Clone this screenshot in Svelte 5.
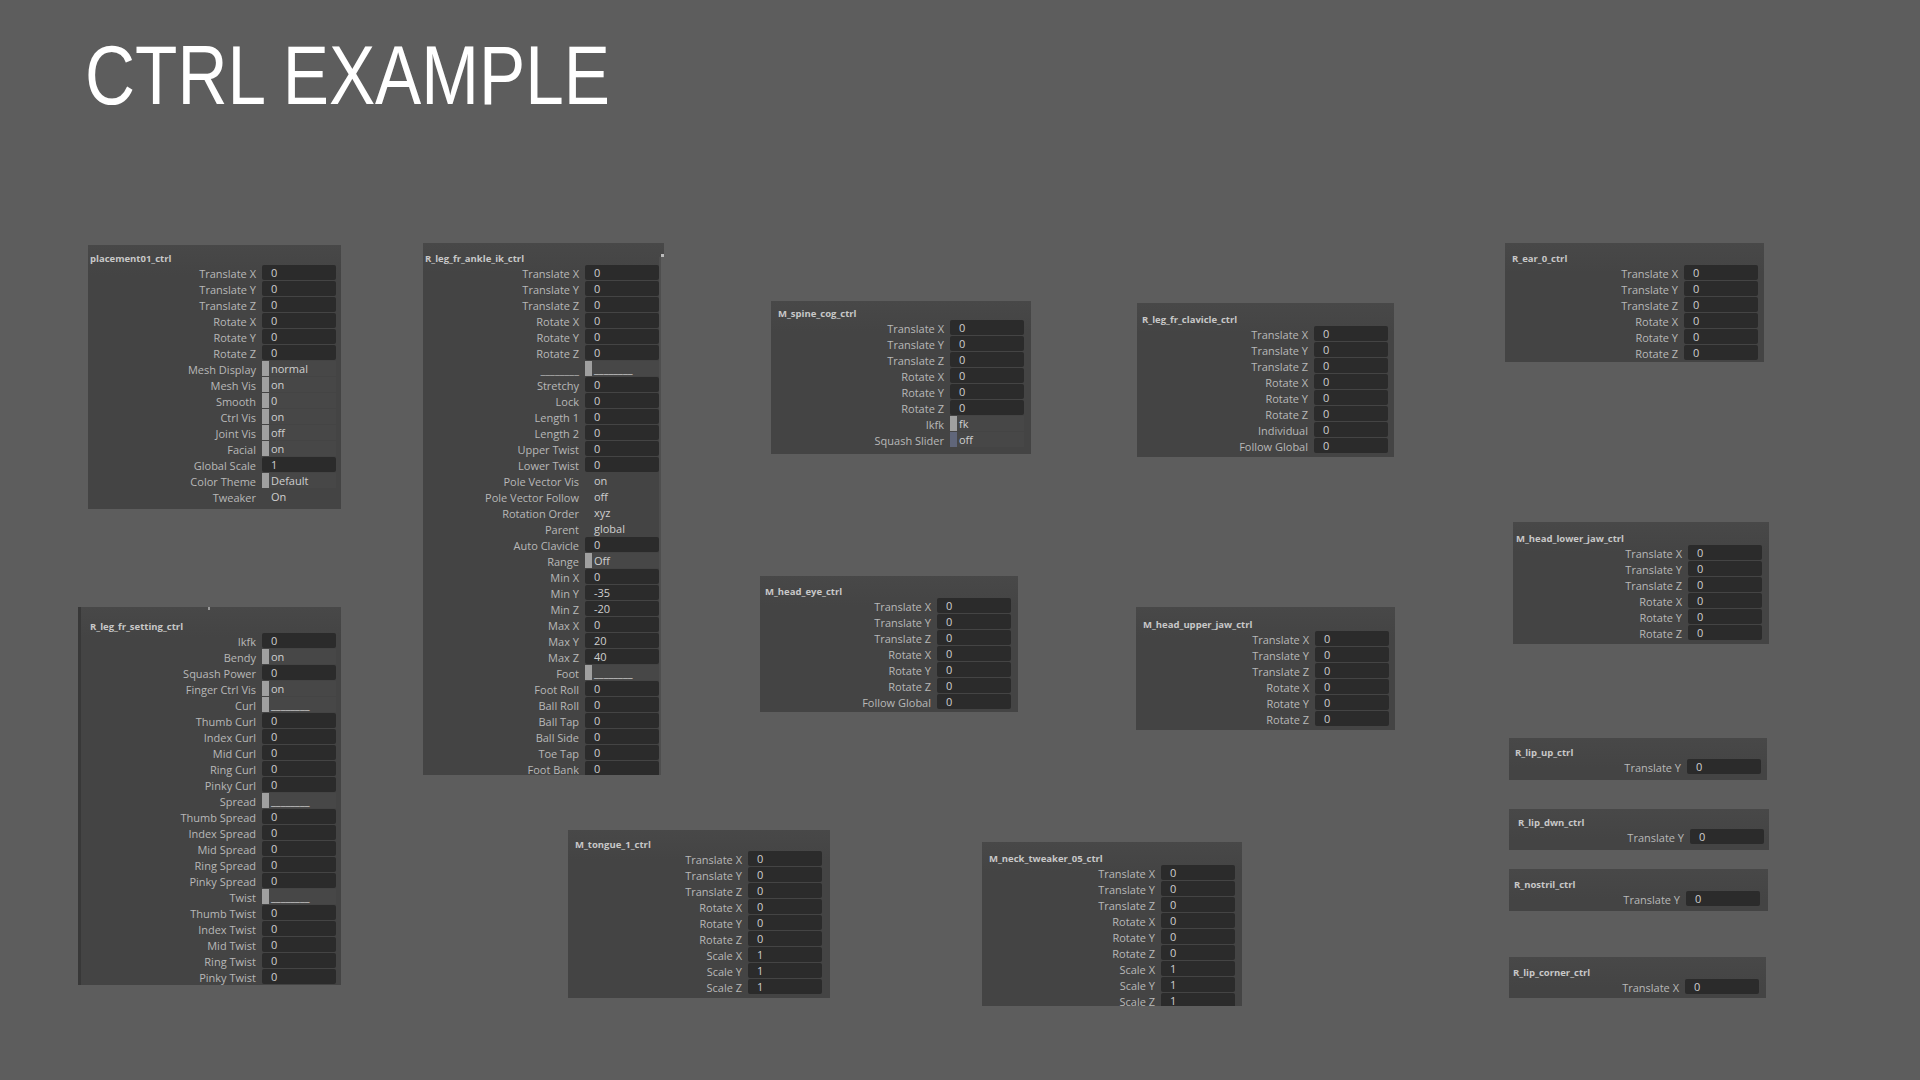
<script>
  const xf = ['Translate X', 'Translate Y', 'Translate Z', 'Rotate X', 'Rotate Y', 'Rotate Z']
    .map(t => ({ l: t, v: '0' }))
  const f = (l, v = '0') => ({ l, v })
  const h = (l, v) => ({ l, v, kind: 'handle' })
  const p = (l, v) => ({ l, v, kind: 'plain' })
  const line = '________'

  const panels = [
    { name: 'placement01_ctrl', x: 88, y: 245, w: 253, h: 264, tx: 2, head: 20, fx: 174, rows: [
      ...xf, h('Mesh Display', 'normal'), h('Mesh Vis', 'on'), h('Smooth', '0'), h('Ctrl Vis', 'on'),
      h('Joint Vis', 'off'), h('Facial', 'on'), f('Global Scale', '1'), h('Color Theme', 'Default'), p('Tweaker', 'On') ] },
    { name: 'R_leg_fr_setting_ctrl', x: 78, y: 607, w: 263, h: 378, tx: 12, head: 26, fx: 184, strip: true, rows: [
      f('Ikfk'), h('Bendy', 'on'), f('Squash Power'), h('Finger Ctrl Vis', 'on'), h('Curl', line),
      f('Thumb Curl'), f('Index Curl'), f('Mid Curl'), f('Ring Curl'), f('Pinky Curl'), h('Spread', line),
      f('Thumb Spread'), f('Index Spread'), f('Mid Spread'), f('Ring Spread'), f('Pinky Spread'), h('Twist', line),
      f('Thumb Twist'), f('Index Twist'), f('Mid Twist'), f('Ring Twist'), f('Pinky Twist') ] },
    { name: 'R_leg_fr_ankle_ik_ctrl', x: 423, y: 243, w: 241, h: 532, tx: 2, head: 22, fx: 162, side: true, rows: [
      ...xf, h(line, line), f('Stretchy'), f('Lock'), f('Length 1'), f('Length 2'), f('Upper Twist'), f('Lower Twist'),
      p('Pole Vector Vis', 'on'), p('Pole Vector Follow', 'off'), p('Rotation Order', 'xyz'), p('Parent', 'global'),
      f('Auto Clavicle'), h('Range', 'Off'), f('Min X'), f('Min Y', '-35'), f('Min Z', '-20'), f('Max X'), f('Max Y', '20'), f('Max Z', '40'),
      h('Foot', line), f('Foot Roll'), f('Ball Roll'), f('Ball Tap'), f('Ball Side'), f('Toe Tap'), f('Foot Bank') ] },
    { name: 'M_spine_cog_ctrl', x: 771, y: 301, w: 260, h: 153, tx: 7, head: 19, fx: 179, rows: [
      ...xf, h('Ikfk', 'fk'), { l: 'Squash Slider', v: 'off', kind: 'handle', blue: true } ] },
    { name: 'R_leg_fr_clavicle_ctrl', x: 1137, y: 303, w: 257, h: 154, tx: 5, head: 23, fx: 177, rows: [
      ...xf, f('Individual'), f('Follow Global') ] },
    { name: 'M_head_eye_ctrl', x: 760, y: 576, w: 258, h: 136, tx: 5, head: 22, fx: 177, rows: [ ...xf, f('Follow Global') ] },
    { name: 'M_head_upper_jaw_ctrl', x: 1136, y: 607, w: 259, h: 123, tx: 7, head: 24, fx: 179, rows: xf },
    { name: 'M_tongue_1_ctrl', x: 568, y: 830, w: 262, h: 168, tx: 7, head: 21, fx: 180, rows: [
      ...xf, f('Scale X', '1'), f('Scale Y', '1'), f('Scale Z', '1') ] },
    { name: 'M_neck_tweaker_05_ctrl', x: 982, y: 842, w: 260, h: 164, tx: 7, head: 23, fx: 179, rows: [
      ...xf, f('Scale X', '1'), f('Scale Y', '1'), f('Scale Z', '1') ] },
    { name: 'R_ear_0_ctrl', x: 1505, y: 243, w: 259, h: 119, tx: 7, head: 22, fx: 179, rows: xf },
    { name: 'M_head_lower_jaw_ctrl', x: 1513, y: 522, w: 256, h: 122, tx: 3, head: 23, fx: 175, rows: xf },
    { name: 'R_lip_up_ctrl', x: 1509, y: 738, w: 258, h: 42, tx: 6, head: 21, fx: 178, rows: [f('Translate Y')] },
    { name: 'R_lip_dwn_ctrl', x: 1509, y: 809, w: 260, h: 41, tx: 9, head: 20, fx: 181, rows: [f('Translate Y')] },
    { name: 'R_nostril_ctrl', x: 1509, y: 869, w: 259, h: 42, tx: 5, head: 22, fx: 177, rows: [f('Translate Y')] },
    { name: 'R_lip_corner_ctrl', x: 1509, y: 957, w: 257, h: 41, tx: 4, head: 22, fx: 176, rows: [f('Translate X')] }
  ]
</script>

<main class="page">
  <h1>CTRL EXAMPLE</h1>

  {#each panels as pn}
    <section class="panel" class:strip={pn.strip} class:side={pn.side}
      style="left:{pn.x}px;top:{pn.y}px;width:{pn.w}px;height:{pn.h}px;--fx:{pn.fx - (pn.strip ? 3 : 0)}px">
      <div class="head" style="height:{pn.head}px;padding-left:{pn.tx - (pn.strip ? 3 : 0)}px">{pn.name}</div>
      {#each pn.rows as r}
        <div class="row">
          <span class="lab">{r.l}</span>
          <div class="val {r.kind || 'num'}">
            {#if r.kind === 'handle'}<i class:blue={r.blue}></i>{/if}
            <span>{r.v}</span>
          </div>
        </div>
      {/each}
      {#if pn.side}<b class="rail"></b><b class="tick"></b>{/if}
      {#if pn.strip}<b class="speck"></b>{/if}
    </section>
  {/each}
</main>

<style>
  :global(body) {
    margin: 0;
    background: #5d5d5d;
  }

  .page {
    position: relative;
    width: 1920px;
    height: 1080px;
    overflow: hidden;
    background: #5d5d5d;
    font-family: "Open Sans", "Liberation Sans", sans-serif;
  }

  h1 {
    width: max-content;
    margin: 0 0 0 85px;
    padding-top: 31px;
    font-family: "Liberation Sans", sans-serif;
    font-weight: 400;
    font-size: 83px;
    line-height: 90px;
    color: #fff;
    transform: scaleX(.835);
    transform-origin: left;
  }

  .panel {
    position: absolute;
    box-sizing: border-box;
    overflow: hidden;
    background: linear-gradient(#484848, #444 30px);
  }

  .panel.strip {
    border-left: 3px solid #383838;
  }

  /* the ankle panel sticks out a little at its top right corner */
  .panel.side {
    clip-path: polygon(0 0, 100% 0, 100% 14px, 238px 14px, 238px 100%, 0 100%);
  }

  .head {
    box-sizing: border-box;
    display: flex;
    align-items: flex-end;
    font-size: 9.5px;
    font-weight: 700;
    line-height: 13px;
    color: #c8c8c8;
  }

  .row {
    display: flex;
    height: 16px;
    font-size: 11px;
    line-height: 15px;
  }

  .lab {
    box-sizing: border-box;
    width: var(--fx);
    flex: none;
    padding: 1px 6px 0 0;
    text-align: right;
    white-space: nowrap;
    color: #b8b8b8;
  }

  .val {
    box-sizing: border-box;
    display: flex;
    width: 74px;
    height: 15px;
    padding-left: 9px;
    color: #cfcfcf;
  }

  .val.num {
    background: #2b2b2b;
    border-radius: 2px;
  }

  .val.handle {
    padding-left: 0;
    background: #474747;
  }

  .val.handle span {
    padding-left: 2px;
  }

  .val i {
    display: block;
    flex: none;
    width: 7px;
    height: 15px;
    background: #a0a0a0;
  }

  .val i.blue {
    background: #60667a;
  }

  .rail {
    position: absolute;
    left: 236px;
    top: 14px;
    bottom: 0;
    width: 2px;
    background: #4e4e4e;
  }

  .tick {
    position: absolute;
    right: 0;
    top: 11px;
    width: 3px;
    height: 3px;
    background: #bbb;
  }

  .speck {
    position: absolute;
    left: 127px;
    top: 0;
    width: 2px;
    height: 3px;
    background: #999;
  }
</style>
